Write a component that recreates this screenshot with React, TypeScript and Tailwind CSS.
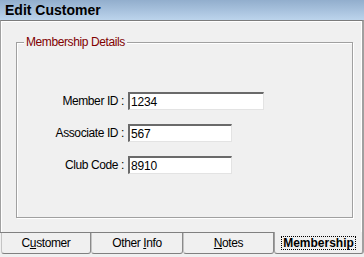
const fields = [
  { label: "Member ID :", value: "1234", width: "w-[136px]" },
  { label: "Associate ID :", value: "567", width: "w-[104px]" },
  { label: "Club Code :", value: "8910", width: "w-[104px]" },
];

const Tab = ({ width, children }: { width: string; children: React.ReactNode }) => (
  <div
    className={`${width} h-[21px] flex items-center justify-center border-l border-l-[#c4c4c4] border-r border-r-[#8a8a8a] border-b border-b-[#808080] rounded-b-[3px] text-[12px] tracking-[-0.4px] text-black`}
  >
    <span>{children}</span>
  </div>
);

export default function App() {
  return (
    <div className="w-[364px] h-[257px] bg-[#f0f0f0] overflow-hidden font-['Liberation_Sans',sans-serif] select-none">
      <div className="h-[20px] bg-gradient-to-b from-[#92aecd] to-[#bcd4ec] px-[5px] flex items-center">
        <span className="font-bold text-[14px] text-black leading-none">Edit Customer</span>
      </div>

      <div className="h-[212px] border-t border-t-[#7c7c7c] border-l border-l-[#a0a0a0] border-r-2 border-r-[#a0a0a0] shadow-[inset_1px_1px_0_#fff,inset_-1px_0_0_#fff] pt-[21px] pl-[15px]">
        <div className="relative w-[337px] h-[176px] border border-[#a0a0a0] shadow-[inset_1px_1px_0_#fff,1px_1px_0_#fff]">
          <span className="absolute -top-[9px] left-[7px] bg-[#f0f0f0] px-[2px] text-[12px] tracking-[-0.4px] leading-[16px] text-[#800000]">
            Membership Details
          </span>
          <div className="flex flex-col gap-[14px] pt-[49px]">
            {fields.map((f) => (
              <div key={f.label} className="flex items-center h-[18px]">
                <div className="w-[108px] text-right text-[12px] tracking-[-0.4px] text-black pr-[1px]">
                  {f.label}
                </div>
                <div
                  className={`${f.width} h-[18px] ml-[3px] bg-white border-t-2 border-l-2 border-t-[#6a6a6a] border-l-[#6a6a6a] border-r border-b border-r-[#e3e3e3] border-b-[#e3e3e3] flex items-center pl-[1px] text-[12px] tracking-[-0.2px] text-black`}
                >
                  {f.value}
                </div>
              </div>
            ))}
          </div>
        </div>
      </div>

      <div className="flex items-start h-[25px]">
        <div className="w-[274px] border-t border-t-[#808080] flex pl-[1px]">
          <Tab width="w-[90px]">
            C<span className="underline">u</span>stomer
          </Tab>
          <Tab width="w-[92px]">
            Other <span className="underline">I</span>nfo
          </Tab>
          <Tab width="w-[91px]">
            <span className="underline">N</span>otes
          </Tab>
        </div>
        <div className="w-[90px] h-[22px] flex items-center justify-center border-l border-l-[#a0a0a0] border-r-2 border-r-[#a0a0a0] border-b border-b-[#808080] rounded-b-[3px] pt-[1px]">
          <span className="border border-dotted border-black px-[1px] text-[12px] leading-[12px] font-bold text-black">
            Membership
          </span>
        </div>
      </div>
    </div>
  );
}
